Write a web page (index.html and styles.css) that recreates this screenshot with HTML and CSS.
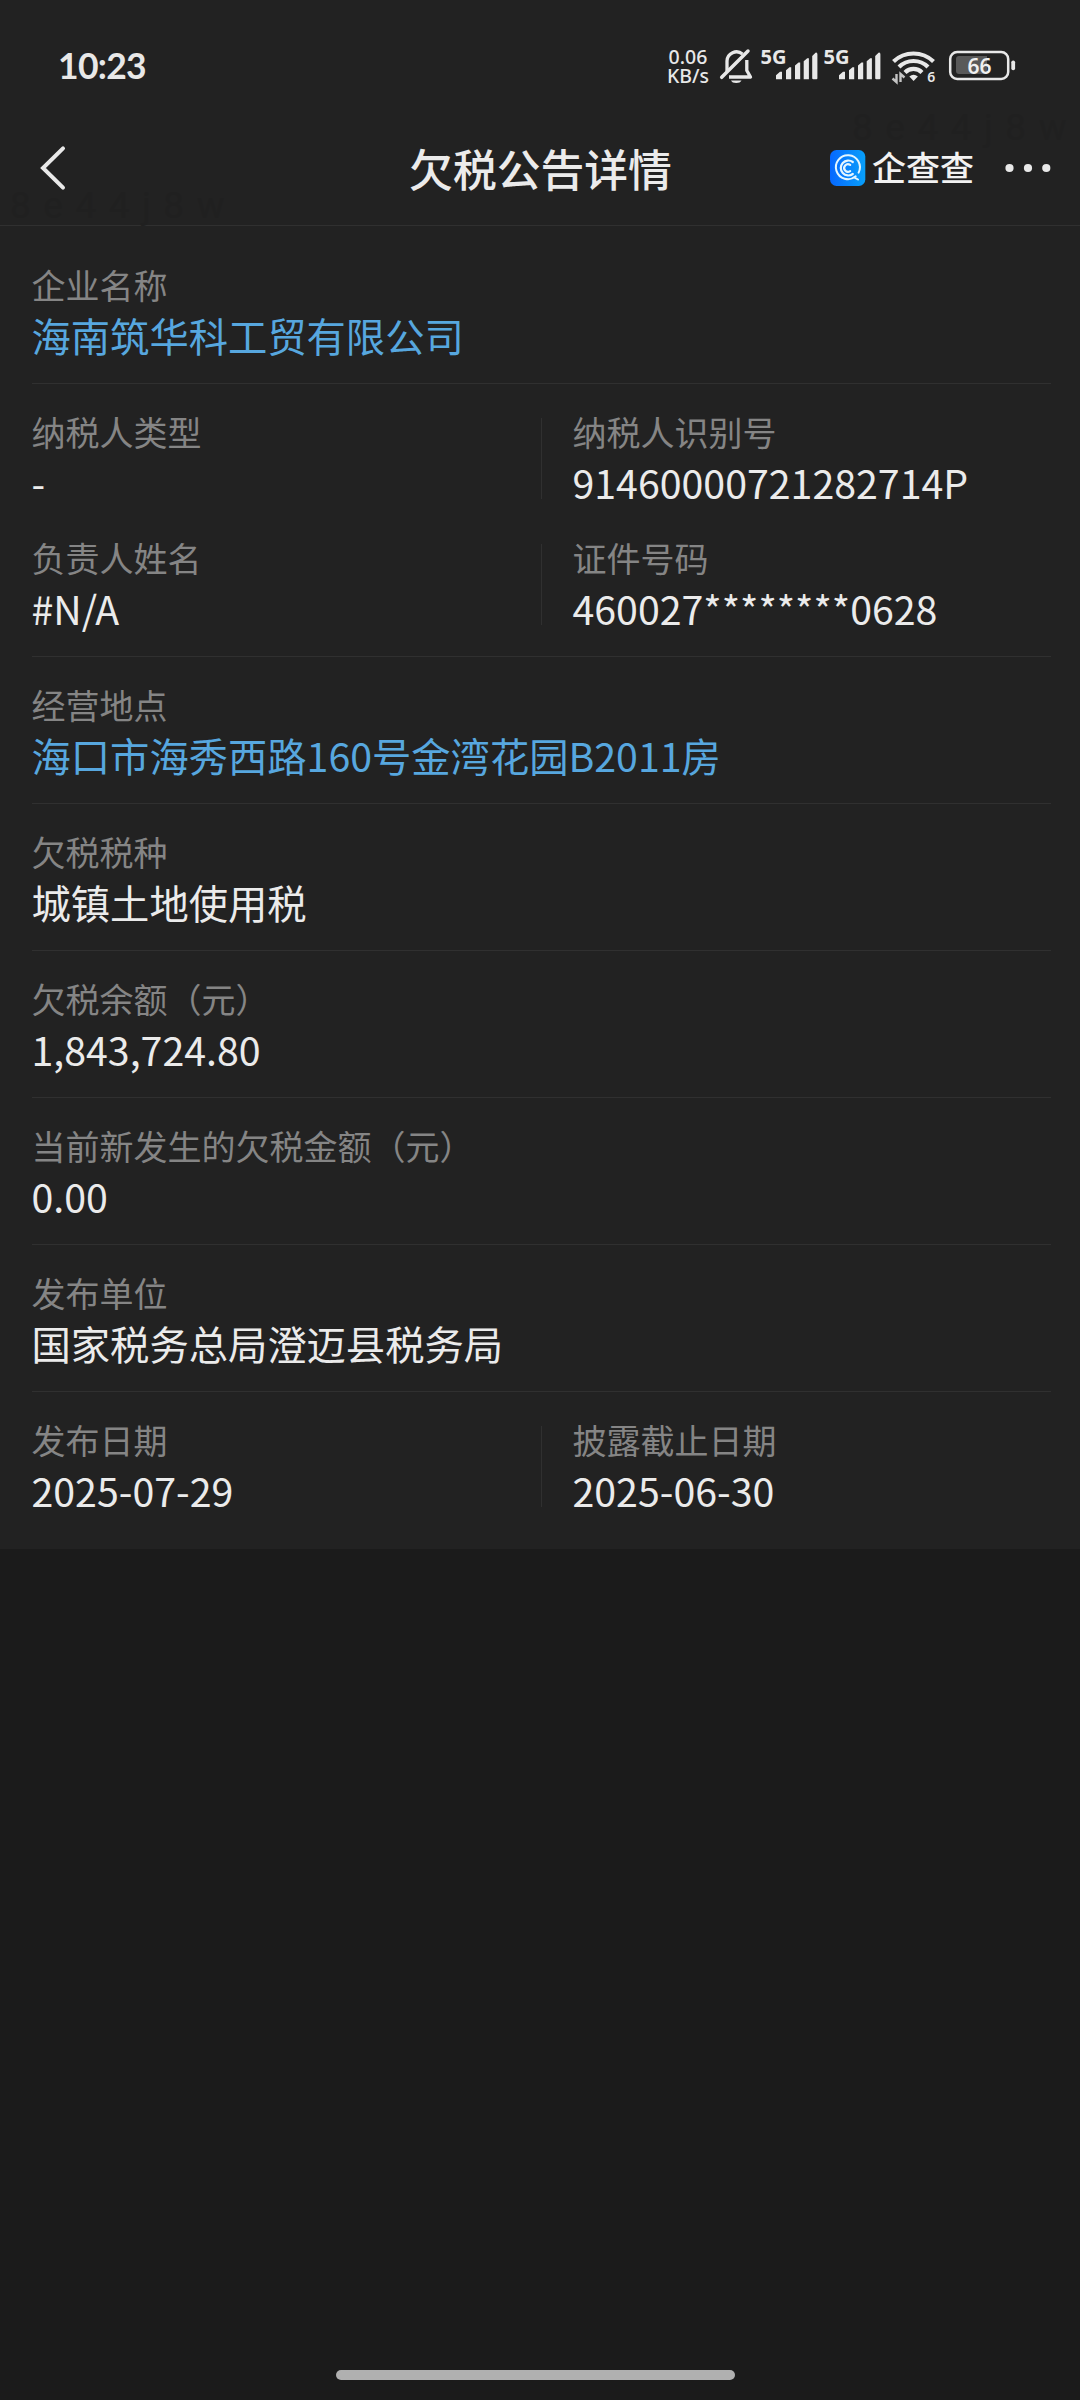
FILE: index.html
```html
<!DOCTYPE html>
<html lang="zh-CN">
<head>
<meta charset="utf-8">
<title>欠税公告详情</title>
<link rel="stylesheet" href="styles.css">
</head>
<body>
<div class="screen">
  <header class="header">
    <span class="watermark watermark-left" aria-hidden="true">8e44j8w</span>
    <span class="watermark watermark-right" aria-hidden="true">8e44j8w</span>
    <div class="status">
      <span class="time">10:23</span>
      <div class="indicators">
        <div class="speed"><span>0.06</span><span>KB/s</span></div>
        <svg class="bell" width="36" height="40" viewBox="719 46 36 40">
          <path d="M727 71.500V61a9.500 9.500 0 0 1 15.500-7M746.800 60v10.500l3.700 6.500H729" fill="none" stroke="#e8e8e8" stroke-width="3.300" stroke-linejoin="round"/>
          <path d="M721.700 77.300 748 51" stroke="#e8e8e8" stroke-width="3.500" stroke-linecap="round"/>
          <path d="M731 80.500h10.500a5.500 3.600 0 0 1-10.500 0z" fill="#e8e8e8"/>
        </svg>
        <svg class="signal" width="60" height="48" viewBox="760 42 60 48">
          <text x="760.500" y="63.800" textLength="26" lengthAdjust="spacingAndGlyphs">5G</text>
          <g fill="#e8e8e8"><path d="M776 79.300v-4l4-3.500h2v7.500zM786 79.300v-9l3.500-3h1.700v12zM795 79.300V65.500l3.500-3h1.700v16.800zM803.700 79.300v-18l3.500-3h1.700v21z"/><path d="M812.200 78.300V56l3.300-3.300q1.900-.5 1.900 1.500v24q0 1-1 1h-3q-1.200 0-1.200-1z"/></g>
        </svg>
        <svg class="signal" width="60" height="48" viewBox="760 42 60 48">
          <text x="760.500" y="63.800" textLength="26" lengthAdjust="spacingAndGlyphs">5G</text>
          <g fill="#e8e8e8"><path d="M776 79.300v-4l4-3.500h2v7.500zM786 79.300v-9l3.500-3h1.700v12zM795 79.300V65.500l3.500-3h1.700v16.800zM803.700 79.300v-18l3.500-3h1.700v21z"/><path d="M812.200 78.300V56l3.300-3.300q1.900-.5 1.900 1.500v24q0 1-1 1h-3q-1.200 0-1.200-1z"/></g>
        </svg>
        <svg class="wifi" width="46" height="40" viewBox="891 46 46 40">
          <g fill="none" stroke="#e8e8e8" stroke-width="4.200"><path d="M893.500 61.500a29 29 0 0 1 40 0"/><path d="M899 67a20.500 20.500 0 0 1 29 0"/><path d="M905 72.500a12 12 0 0 1 17 0"/></g>
          <path d="M909.300 76.500q4.300-3.400 8.600 0L913.600 81z" fill="#e8e8e8"/>
          <path d="M892.500 78.500 896.500 82V74M900.500 82V74l4 3.500" fill="none" stroke="#c4c4c4" stroke-width="2.400"/>
          <text class="wifi-gen" x="927.300" y="82">6</text>
        </svg>
        <svg class="battery" width="68" height="40" viewBox="948 46 68 40">
          <rect x="950.200" y="52" width="58" height="27" rx="7" fill="none" stroke="#e8e8e8" stroke-width="2.500"/>
          <path d="M959 56h28v18h-28q-3 0-3-3V59q0-3 3-3z" fill="#595959"/>
          <rect x="1011.300" y="60.500" width="3.800" height="9.700" rx="1.800" fill="#e8e8e8"/>
          <text x="979.500" y="73.600" text-anchor="middle">66</text>
        </svg>
      </div>
    </div>
    <nav class="nav">
      <svg class="back" width="32" height="52" viewBox="36 143 32 52"><path d="M63 149.300 43 169l20 19.700" fill="none" stroke="#e9e9e9" stroke-width="4" stroke-linecap="round" stroke-linejoin="miter"/></svg>
      <h1 class="title">欠税公告详情</h1>
      <div class="actions">
        <div class="brand">
          <svg width="36" height="36" viewBox="0 0 36 36">
            <defs><linearGradient id="blue"><stop offset="0" stop-color="#0668ff"/><stop offset="1" stop-color="#08a0fa"/></linearGradient></defs>
            <rect width="35.300" height="36" rx="6.500" fill="url(#blue)"/>
            <g fill="none" stroke="#e4f6ff" stroke-linecap="round"><path d="M25.700 26.300A12 12 0 1 1 28.600 22.600M24.600 27.600 28 29.500" stroke-width="2"/><path d="M22.800 12a7.500 7.500 0 1 0 0 12" stroke-width="2.200"/><path d="M20.200 14.900a3.800 3.800 0 1 0 0 6.200" stroke-width="2.200"/></g>
          </svg>
          <span class="brand-name">企查查</span>
        </div>
        <svg class="more" width="46" height="10" viewBox="0 0 46 10" fill="#e9e9e9"><circle cx="4.500" cy="5" r="4.100"/><circle cx="23" cy="5" r="4.100"/><circle cx="41.300" cy="5" r="4.100"/></svg>
      </div>
    </nav>
  </header>

  <main class="details">
    <section class="group">
      <div class="field"><span class="label">企业名称</span><a class="value link">海南筑华科工贸有限公司</a></div>
    </section>
    <section class="group">
      <div class="pair">
        <div class="field"><span class="label">纳税人类型</span><span class="value">-</span></div>
        <i class="divider"></i>
        <div class="field"><span class="label">纳税人识别号</span><span class="value">91460000721282714P</span></div>
      </div>
      <div class="pair">
        <div class="field"><span class="label">负责人姓名</span><span class="value">#N/A</span></div>
        <i class="divider"></i>
        <div class="field"><span class="label">证件号码</span><span class="value">460027********0628</span></div>
      </div>
    </section>
    <section class="group">
      <div class="field"><span class="label">经营地点</span><a class="value link">海口市海秀西路160号金湾花园B2011房</a></div>
    </section>
    <section class="group">
      <div class="field"><span class="label">欠税税种</span><span class="value">城镇土地使用税</span></div>
    </section>
    <section class="group">
      <div class="field"><span class="label">欠税余额（元）</span><span class="value">1,843,724.80</span></div>
    </section>
    <section class="group">
      <div class="field"><span class="label">当前新发生的欠税金额（元）</span><span class="value">0.00</span></div>
    </section>
    <section class="group">
      <div class="field"><span class="label">发布单位</span><span class="value">国家税务总局澄迈县税务局</span></div>
    </section>
    <section class="group">
      <div class="pair">
        <div class="field"><span class="label">发布日期</span><span class="value">2025-07-29</span></div>
        <i class="divider"></i>
        <div class="field"><span class="label">披露截止日期</span><span class="value">2025-06-30</span></div>
      </div>
    </section>
  </main>
  <div class="home-bar"></div>
</div>
</body>
</html>
```
FILE: styles.css
```css
* { box-sizing: border-box; }

body {
  margin: 0;
  background: #1b1b1b;
  color: #ebebeb;
  font-family: "Noto Sans CJK SC", sans-serif;
}

.screen {
  display: flex;
  flex-direction: column;
  width: 1080px;
  height: 2400px;
  overflow: hidden;
}

.header {
  position: relative;
  height: 226px;
  background: #222;
  border-bottom: 1px solid #303030;
}

.watermark {
  position: absolute;
  color: #202020;
  font: 37px/40px Roboto, sans-serif;
  letter-spacing: 12.500px;
}
.watermark-left { left: 10px; top: 186px; }
.watermark-right { left: 852px; top: 108px; }

.status {
  position: relative;
  display: flex;
  justify-content: space-between;
  align-items: center;
  height: 110px;
  padding: 22px 64px 0 58px;
}

.time {
  font: 700 35.500px/40px Lato, sans-serif;
  letter-spacing: -0.700px;
  color: #e8e8e8;
}

.indicators {
  display: flex;
  align-items: center;
}

.speed {
  display: flex;
  flex-direction: column;
  align-items: center;
  width: 42px;
  margin-right: 10px;
  font: 500 19.500px/19px "Noto Sans", sans-serif;
  color: #e8e8e8;
}

.bell { margin-right: 5px; }
.signal { margin-right: 3px; }
.wifi { margin-left: 5px; margin-right: 11px; }

.signal text { font: 700 19px "Noto Sans", sans-serif; fill: #e8e8e8; }
.battery text { font: 600 21px "Noto Sans", sans-serif; fill: #f0f0f0; }
.wifi-gen { font: 600 14px "Noto Sans", sans-serif; fill: #e8e8e8; }

.nav {
  position: relative;
  display: grid;
  grid-template-columns: 1fr auto 1fr;
  align-items: center;
  height: 115px;
  padding: 0 29px 0 36px;
}

.title {
  margin: 1px 0 0;
  padding-right: 6px;
  font-size: 43.800px;
  line-height: 64px;
  font-weight: 500;
}

.actions {
  display: flex;
  align-items: center;
  justify-content: flex-end;
  gap: 31px;
}

.brand { display: flex; align-items: center; gap: 6px; }
.brand-name {
  padding-bottom: 2px;
  font-size: 34px;
  line-height: 44px;
  font-weight: 500;
  color: #f2f2f2;
}

.details { background: #222; padding-bottom: 11px; }

.group {
  display: flex;
  flex-direction: column;
  gap: 24px;
  margin: 0 29px 0 32px;
  padding: 23px 0 21px;
  border-top: 1px solid #303030;
}
.group:first-child { border-top: 0; padding-top: 34px; }

.field { display: flex; flex-direction: column; margin-left: -0.500px; }

.label {
  padding-top: 1px;
  font-size: 34px;
  line-height: 48px;
  color: #858585;
}

.value {
  padding-bottom: 2px;
  font-size: 39.300px;
  line-height: 51px;
}

.link { color: #57a7df; }

.pair {
  display: grid;
  grid-template-columns: 509px 1px 1fr;
}
.pair .field:last-child { padding-left: 31px; }

.divider { margin: 11px 0 10px; background: #303030; }

.home-bar {
  width: 399px;
  height: 10px;
  margin: auto auto 20px 336px;
  border-radius: 5px;
  background: #b0b0b0;
}
```
